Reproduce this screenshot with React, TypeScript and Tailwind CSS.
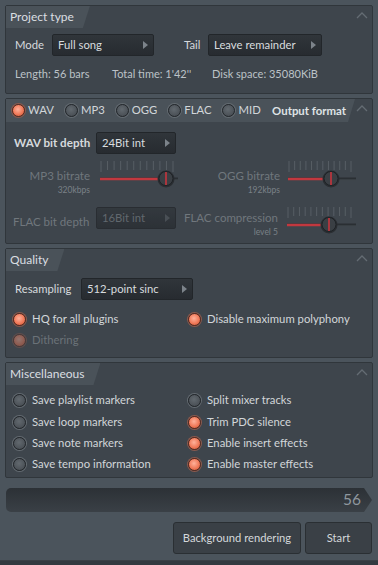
import type { ReactNode } from 'react'

const FONT = "font-['Lato','Noto_Sans',sans-serif]"

function Caret() {
  return (
    <svg width="14" height="10" viewBox="0 0 14 10" className="mr-[3px] mt-[5px] shrink-0">
      <path d="M2 7 L7 2 L12 7" fill="none" stroke="#646c73" strokeWidth="1.3" />
    </svg>
  )
}

function Tab({ children }: { children: ReactNode }) {
  return (
    <div className="flex h-[22px] items-center whitespace-nowrap bg-[#4a5259] pl-[4px] pr-[16px] text-[12px] text-[#dadee1] [clip-path:polygon(0_0,100%_0,calc(100%-7px)_100%,0_100%)]">
      {children}
    </div>
  )
}

function Section({ title, children, height }: { title: string; children: ReactNode; height: string }) {
  return (
    <div className={`flex shrink-0 flex-col rounded-[2px] border border-[#30363b] bg-[#3e454c] ${height}`}>
      <div className="flex items-start justify-between">
        <Tab>{title}</Tab>
        <Caret />
      </div>
      {children}
    </div>
  )
}

function Dropdown({ value, width, disabled }: { value: string; width: string; disabled?: boolean }) {
  return (
    <div
      className={`flex h-[22px] shrink-0 items-center justify-between whitespace-nowrap rounded-[2px] border border-[#22262a] bg-gradient-to-b from-[#30353a] to-[#272b30] pl-[5px] pr-[5px] text-[11.3px] ${width} ${
        disabled ? 'text-[#6d747a] opacity-75' : 'text-[#d8dcdf]'
      }`}
    >
      <span>{value}</span>
      <svg width="5" height="8" viewBox="0 0 5 8">
        <path d="M0 0 L5 4 L0 8 Z" fill={disabled ? '#4d5358' : '#7c838a'} />
      </svg>
    </div>
  )
}

function Radio({ on, dim }: { on?: boolean; dim?: boolean }) {
  return (
    <span
      className={`inline-block h-[13px] w-[13px] shrink-0 rounded-full border ${
        on
          ? 'border-[#5c2a1e] bg-[radial-gradient(circle_at_45%_40%,#ffb19a,#f07a5a_55%,#c4502f)] shadow-[0_0_0_1px_#8a5a4e]'
          : 'border-[#24282c] bg-[radial-gradient(circle_at_45%_40%,#62696f,#4b5157_70%,#3c4146)] shadow-[0_0_0_1px_#646b71]'
      } ${dim ? 'opacity-45' : ''}`}
    />
  )
}

function Option({ on, dim, label, gap = 'gap-[6px]' }: { on?: boolean; dim?: boolean; label: string; gap?: string }) {
  return (
    <div className={`flex h-[21px] items-center whitespace-nowrap ${gap}`}>
      <Radio on={on} dim={dim} />
      <span className={`text-[11.3px] ${dim ? 'text-[#6b7278]' : 'text-[#d2d6d9]'}`}>{label}</span>
    </div>
  )
}

function Slider({ knob, width }: { knob: number; width: number }) {
  const ticks = Array.from({ length: 12 }, (_, i) => 2 + i * ((width - 8) / 11))
  return (
    <svg width={width} height="32" viewBox={`0 0 ${width} 32`} className="shrink-0">
      {ticks.map((x, i) => (
        <line key={i} x1={x} y1="2" x2={x} y2={i === 0 || i === 11 ? 13 : 11} stroke="#575e65" strokeWidth="1" />
      ))}
      <line x1="1" y1="20" x2={width - 1} y2="20" stroke="#2a2f33" strokeWidth="3" />
      <line x1="1" y1="21" x2={width - 1} y2="21" stroke="#555c62" strokeWidth="0.7" />
      <line x1="1" y1="20" x2={knob} y2="20" stroke="#c2383f" strokeWidth="2.5" />
      <circle cx={knob} cy="20" r="8.5" fill="#2a2e32" />
      <circle cx={knob} cy="19.5" r="7" fill="#3a3f44" stroke="#1e2226" strokeWidth="1" />
      <line x1={knob} y1="13" x2={knob} y2="26" stroke="#d0343c" strokeWidth="1.5" />
    </svg>
  )
}

export default function App() {
  return (
    <div className={`flex h-[565px] w-[378px] flex-col overflow-hidden bg-[#4b545c] ${FONT}`}>
      <div className="flex flex-col px-[5px] pt-[5px]">
        <Section title="Project type" height="h-[89px]">
          <div className="mt-[6px] flex items-center pl-[9px]">
            <span className="w-[37px] text-[11.3px] text-[#d6dadd]">Mode</span>
            <Dropdown value="Full song" width="w-[102px]" />
            <span className="ml-[30px] w-[24px] text-[11.3px] text-[#d6dadd]">Tail</span>
            <Dropdown value="Leave remainder" width="w-[114px]" />
          </div>
          <div className="mt-[10px] flex items-center whitespace-nowrap pl-[9px] text-[11px] text-[#bcc2c7]">
            <span className="w-[97px]">Length: 56 bars</span>
            <span className="w-[100px]">Total time: 1'42''</span>
            <span>Disk space: 35080KiB</span>
          </div>
        </Section>

        <div className="mt-[4px] flex h-[146px] shrink-0 flex-col rounded-[2px] border border-[#30363b] bg-[#3e454c]">
          <div className="flex items-start justify-between">
            <div className="flex h-[23px] flex-1 items-center whitespace-nowrap bg-[#4a5259] pl-[6px] pr-[9px] [clip-path:polygon(0_0,100%_0,calc(100%-7px)_100%,0_100%)]">
              <div className="flex gap-[11px]">
                <Option on label="WAV" gap="gap-[3px]" />
                <Option label="MP3" gap="gap-[3px]" />
                <Option label="OGG" gap="gap-[3px]" />
                <Option label="FLAC" gap="gap-[3px]" />
                <Option label="MID" gap="gap-[3px]" />
              </div>
              <span className="ml-auto text-[11.4px] font-bold text-[#dfe2e5]">Output format</span>
            </div>
            <Caret />
          </div>
          <div className="mt-[10px] flex items-center">
            <span className="w-[90px] whitespace-nowrap pl-[8px] text-[11.6px] font-bold text-[#d6dadd]">WAV bit depth</span>
            <Dropdown value="24Bit int" width="w-[80px]" />
          </div>
          <div className="mt-[5px] flex">
            <div className="flex w-[84px] shrink-0 flex-col items-end whitespace-nowrap pt-[11px] leading-none">
              <span className="text-[11.5px] text-[#70777d]">MP3 bitrate</span>
              <span className="mt-[4px] text-[8.5px] text-[#7a8187]">320kbps</span>
            </div>
            <div className="ml-[9px]">
              <Slider knob={67} width={80} />
            </div>
            <div className="flex w-[101px] shrink-0 flex-col items-end whitespace-nowrap pt-[11px] leading-none">
              <span className="text-[11.5px] text-[#70777d]">OGG bitrate</span>
              <span className="mt-[4px] text-[8.5px] text-[#7a8187]">192kbps</span>
            </div>
            <div className="ml-[7px]">
              <Slider knob={44} width={70} />
            </div>
          </div>
          <div className="mt-[13px] flex">
            <div className="flex w-[90px] shrink-0 items-center whitespace-nowrap pl-[7px] text-[11.5px] text-[#70777d]">
              FLAC bit depth
            </div>
            <Dropdown value="16Bit int" width="w-[80px]" disabled />
            <div className="flex w-[102px] shrink-0 flex-col items-end whitespace-nowrap pt-[5px] leading-none">
              <span className="text-[11.5px] text-[#70777d]">FLAC compression</span>
              <span className="mt-[4px] text-[8.5px] text-[#7a8187]">level 5</span>
            </div>
            <div className="ml-[8px] mt-[-2px]">
              <Slider knob={43} width={71} />
            </div>
          </div>
        </div>

        <div className="mt-[4px]">
          <Section title="Quality" height="h-[110px]">
            <div className="mt-[7px] flex items-center pl-[9px]">
              <span className="w-[66px] whitespace-nowrap text-[11.3px] text-[#d6dadd]">Resampling</span>
              <Dropdown value="512-point sinc" width="w-[112px]" />
            </div>
            <div className="mt-[9px] grid grid-cols-[175px_1fr] pl-[7px]">
              <Option on label="HQ for all plugins" />
              <Option on label="Disable maximum polyphony" />
              <Option on dim label="Dithering" />
            </div>
          </Section>
        </div>

        <div className="mt-[4px]">
          <Section title="Miscellaneous" height="h-[116px]">
            <div className="mt-[5px] grid grid-cols-[175px_1fr] pl-[7px] [&>div]:h-[21.4px]">
              <Option label="Save playlist markers" />
              <Option label="Split mixer tracks" />
              <Option label="Save loop markers" />
              <Option on label="Trim PDC silence" />
              <Option label="Save note markers" />
              <Option on label="Enable insert effects" />
              <Option label="Save tempo information" />
              <Option on label="Enable master effects" />
            </div>
          </Section>
        </div>
      </div>

      <div className="ml-[6px] mr-[6px] mt-[10px] flex h-[24px] items-center justify-end rounded-l-[5px] bg-gradient-to-b from-[#2c3136] to-[#3a4046] pr-[11px] text-[15.5px] text-[#8f979e] [clip-path:polygon(0_0,calc(100%-8px)_0,100%_50%,calc(100%-8px)_100%,0_100%)]">
        56
      </div>

      <div className="mt-[10px] flex justify-end gap-[4px] pr-[6px]">
        <button className="h-[32px] w-[128px] rounded-[3px] border border-[#2a2f33] bg-[#3a4046] text-[11.2px] text-[#d4d8db]">
          Background rendering
        </button>
        <button className="h-[32px] w-[67px] rounded-[3px] border border-[#2a2f33] bg-[#3a4046] text-[11.2px] text-[#d4d8db]">
          Start
        </button>
      </div>

      <div className="mt-auto h-[5px] border-t border-[#3a4046] bg-[#333a40]" />
    </div>
  )
}
